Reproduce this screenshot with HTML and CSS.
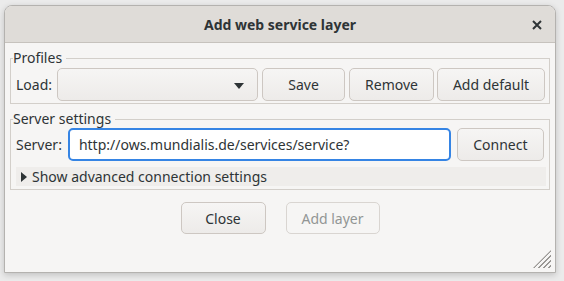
FILE: index.html
```html
<!DOCTYPE html>
<html lang="en">
<head>
    <meta charset="UTF-8">
    <title>Add web service layer</title>
    <link rel="stylesheet" href="styles.css">
</head>
<body>
    <div class="window">
        <!-- Title bar -->
        <div class="titlebar">
            <span class="title">Add web service layer</span>
            <svg class="close-x" width="10" height="10" viewBox="0 0 10 10">
                <path d="M1 1 L9 9 M9 1 L1 9" stroke="#2e3436" stroke-width="2" fill="none"/>
            </svg>
        </div>

        <div class="content">
            <!-- Profiles -->
            <fieldset class="group">
                <legend>Profiles</legend>
                <div class="row row-first">
                    <span class="label">Load:</span>
                    <div class="combo"><span class="arrow"></span></div>
                    <button class="btn btn-save">Save</button>
                    <button class="btn btn-remove">Remove</button>
                    <button class="btn btn-default">Add default</button>
                </div>
            </fieldset>

            <!-- Server settings -->
            <fieldset class="group group-server">
                <legend>Server settings</legend>
                <div class="row">
                    <span class="label label-server">Server:</span>
                    <div class="entry">http://ows.mundialis.de/services/service?</div>
                    <button class="btn btn-connect">Connect</button>
                </div>
                <div class="expander">
                    <span class="tri"></span>
                    Show advanced connection settings
                </div>
            </fieldset>

            <div class="actions">
                <button class="btn btn-close">Close</button>
                <button class="btn btn-add" disabled>Add layer</button>
            </div>
        </div>

        <div class="grip"></div>
    </div>
</body>
</html>
```

FILE: styles.css
```css
* {
    margin: 0;
    padding: 0;
    box-sizing: border-box;
}

body {
    font-family: 'Noto Sans', 'DejaVu Sans', sans-serif;
    font-size: 14px;
    color: #2e3436;
    background-color: #ebebeb;
    padding: 5px 8px 8px 4px;
    width: 564px;
    height: 281px;
    overflow: hidden;
}

/* Window */
.window {
    position: relative;
    width: 552px;
    height: 268px;
    background-color: #f6f5f4;
    border: 1px solid #b4b2af;
    border-radius: 8px 8px 0 0;
    box-shadow: 0 2px 6px rgba(0, 0, 0, 0.18);
}

.titlebar {
    position: relative;
    height: 37px;
    background-color: #dfdcd8;
    border-bottom: 1px solid #c6c2bd;
    border-radius: 7px 7px 0 0;
    display: flex;
    align-items: center;
    justify-content: center;
}

.title {
    font-weight: bold;
    font-size: 14px;
    color: #2e3436;
}

.close-x {
    position: absolute;
    right: 13px;
    top: 14px;
}

.content {
    padding: 6px 5px 0 5px;
}

/* Group boxes */
.group {
    border: 1px solid #d3cfca;
    padding: 0 3px 2px 5px;
}

.group legend {
    padding: 0 4px 0 0;
    margin-left: -3px;
    line-height: 18px;
}

.row-first {
    margin-top: 1px;
}

.group-server {
    margin-top: 6px;
    padding-bottom: 3px;
}

.row {
    display: flex;
    align-items: center;
    height: 33px;
}

.label {
    margin-right: 5px;
}

.label-server {
    margin-right: 6px;
}

.combo {
    width: 201px;
    height: 33px;
    border: 1px solid #cdc7c2;
    border-radius: 5px;
    background: linear-gradient(#f6f5f4, #edebe9);
    position: relative;
}

.arrow {
    position: absolute;
    right: 13px;
    top: 14px;
    width: 0;
    height: 0;
    border-left: 5px solid transparent;
    border-right: 5px solid transparent;
    border-top: 6px solid #2e3436;
}

/* Buttons */
.btn {
    font-family: inherit;
    font-size: 14px;
    color: #2e3436;
    height: 33px;
    border: 1px solid #cdc7c2;
    border-radius: 5px;
    background: linear-gradient(#f6f5f4, #edebe9);
}

.btn-save {
    width: 83px;
    margin-left: 4px;
}

.btn-remove {
    width: 85px;
    margin-left: 4px;
}

.btn-default {
    width: 108px;
    margin-left: 3px;
}

.entry {
    width: 383px;
    height: 33px;
    background-color: #ffffff;
    border: 2px solid #3584e4;
    border-radius: 5px;
    padding-left: 9px;
    line-height: 29px;
}

.btn-connect {
    width: 87px;
    margin-left: 6px;
}

.expander {
    margin-top: 6px;
    height: 19px;
    line-height: 19px;
    background-color: #efedeb;
    display: flex;
    align-items: center;
}

.tri {
    width: 0;
    height: 0;
    margin: 0 5px 0 5px;
    border-top: 5px solid transparent;
    border-bottom: 5px solid transparent;
    border-left: 6px solid #2e3436;
}

.actions {
    display: flex;
    justify-content: center;
    gap: 20px;
    margin-top: 12px;
}

.btn-close {
    width: 85px;
    height: 32px;
}

.btn-add {
    width: 94px;
    height: 32px;
    color: #929595;
    background: #f6f5f4;
    border-color: #d9d5d1;
}

/* Resize grip */
.grip {
    position: absolute;
    right: 4px;
    bottom: 4px;
    width: 18px;
    height: 18px;
    background: repeating-linear-gradient(135deg, transparent 0 2px, #9a9895 2px 3.5px);
    clip-path: polygon(100% 0, 100% 100%, 0 100%);
}
```
